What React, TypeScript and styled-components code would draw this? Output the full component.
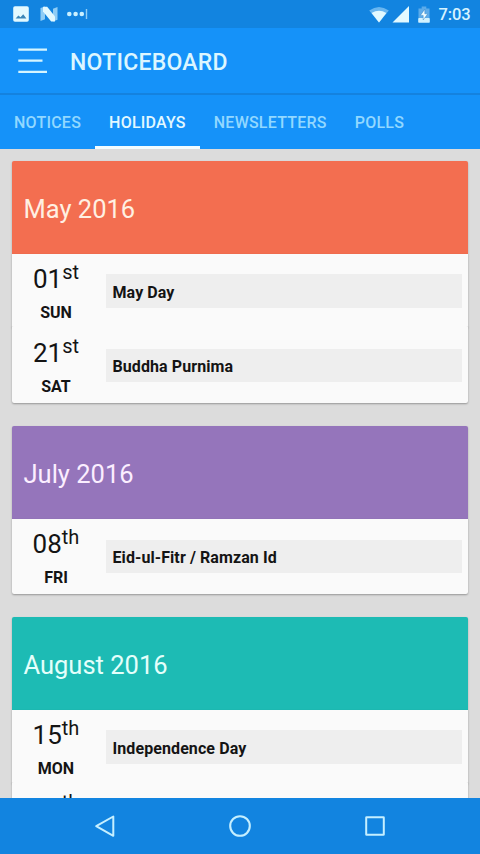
import React from "react";
import styled, { createGlobalStyle } from "styled-components";

const GlobalStyle = createGlobalStyle`
  * { box-sizing: border-box; }
  body { margin: 0; background: #dcdcdc; font-family: Roboto, "Noto Sans", sans-serif; }
`;

const Screen = styled.div`
  display: flex;
  flex-direction: column;
  width: 480px;
  height: 854px;
  overflow: hidden;
  background: #dcdcdc;
`;

const StatusBar = styled.div`
  flex: none;
  display: flex;
  align-items: center;
  justify-content: space-between;
  height: 28px;
  padding: 0 9.5px 0 13px;
  background: #1284e0;
`;

const StatusGroup = styled.div`
  display: flex;
  align-items: center;
`;

const StatusIcon = styled.svg<{ $gap?: number }>`
  display: block;
  flex: none;
  margin-right: ${(p) => p.$gap ?? 0}px;
`;

const Clock = styled.span`
  padding-top: 2px;
  font-size: 16.5px;
  line-height: 26px;
  font-weight: 500;
  color: #d5f3ff;
  letter-spacing: -0.1px;
`;

const AppBar = styled.header`
  flex: none;
  display: flex;
  align-items: center;
  height: 67px;
  padding-left: 18px;
  background: #1592f9;
  border-bottom: 2px solid #1482df;
`;

const MenuButton = styled.button`
  display: block;
  width: 30px;
  height: 28px;
  margin: 0 22px 0 0;
  padding: 0;
  border: 0;
  background: none;
`;

const Title = styled.h1`
  margin: 4px 0 0;
  font-size: 23px;
  line-height: 28px;
  font-weight: 500;
  letter-spacing: 0.25px;
  color: #dcf6ff;
`;

const Tabs = styled.nav`
  flex: none;
  display: flex;
  height: 54px;
  background: #1592f9;
`;

const Tab = styled.a<{ $active?: boolean }>`
  height: 54px;
  padding: 1px 14px 0;
  border-bottom: 3px solid ${(p) => (p.$active ? "#f2fcff" : "transparent")};
  font-size: 16px;
  line-height: 54px;
  font-weight: 500;
  letter-spacing: 0.23px;
  white-space: nowrap;
  color: ${(p) => (p.$active ? "#e2f8ff" : "#92d8ff")};
`;

const Content = styled.main`
  flex: 1;
  min-height: 0;
  overflow: hidden;
  display: flex;
  flex-direction: column;
  gap: 23.5px;
  padding: 12px 12px 0 11.5px;
`;

const Card = styled.section`
  flex: none;
  border-radius: 3px;
`;

const CardHeader = styled.h2<{ $color: string; $ink: string }>`
  height: 92.75px;
  margin: 0;
  padding: 2px 12px 0;
  border-radius: 2px 2px 0 0;
  font-size: 25.5px;
  line-height: 92px;
  font-weight: 400;
  color: ${(p) => p.$ink};
  background: ${(p) => p.$color};
  box-shadow: 0 1px 2px rgba(0, 0, 0, 0.25);
`;

const Row = styled.div`
  position: relative;
  display: grid;
  grid-template-columns: 89px 1fr;
  column-gap: 5.5px;
  height: 74.5px;
  padding-right: 6.5px;
  border-radius: 0 0 2px 2px;
  background: #fafafa;
  box-shadow: 0 1px 2px rgba(0, 0, 0, 0.32);

  /* Stacked rows overlap so only the rounded corners reveal the seam. */
  & + & {
    height: 77.5px;
    margin-top: -3px;
    padding-top: 3px;
    border-radius: 2px;
    clip-path: inset(1px -4px -4px -4px);
  }
`;

const DateCell = styled.div`
  text-align: center;
  color: #141414;
`;

const DayNumber = styled.div`
  display: flex;
  justify-content: center;
  align-items: flex-start;
  height: 46px;
  padding-top: 10px;
  font-size: 26px;
  line-height: 30px;
`;

const Ordinal = styled.span`
  margin-top: -6px;
  font-size: 20px;
  line-height: 28px;
`;

const Weekday = styled.div`
  font-size: 16px;
  line-height: 26px;
  font-weight: 700;
`;

const Holiday = styled.div`
  height: 33.5px;
  margin-top: 20.5px;
  padding: 1.5px 6.5px 0;
  font-size: 16px;
  line-height: 34px;
  font-weight: 700;
  letter-spacing: 0.09px;
  color: #141414;
  background: #eeeeee;
`;

const NavBar = styled.footer`
  flex: none;
  display: grid;
  grid-template-columns: repeat(3, 135px);
  justify-content: center;
  place-items: center;
  height: 56px;
  background: #1284e0;
`;

const months = [
  {
    name: "May 2016",
    color: "#f36e50",
    ink: "#fff0e2",
    days: [
      { n: "01", s: "st", d: "SUN", title: "May Day" },
      { n: "21", s: "st", d: "SAT", title: "Buddha Purnima" },
    ],
  },
  {
    name: "July 2016",
    color: "#9575bb",
    ink: "#fbeeff",
    days: [{ n: "08", s: "th", d: "FRI", title: "Eid-ul-Fitr / Ramzan Id" }],
  },
  {
    name: "August 2016",
    color: "#1dbbb4",
    ink: "#e4fffb",
    days: [
      { n: "15", s: "th", d: "MON", title: "Independence Day" },
      { n: "25", s: "th", d: "THU", title: "Janmashtami" },
    ],
  },
];

const tabs = ["NOTICES", "HOLIDAYS", "NEWSLETTERS", "POLLS"];

export default function App() {
  return (
    <>
      <GlobalStyle />
      <Screen>
        <StatusBar>
          <StatusGroup>
            <StatusIcon $gap={11} width="16" height="16" viewBox="0 0 16 16">
              <rect x="0.2" y="0.2" width="15.6" height="15.6" rx="1.8" fill="#e2f9ff" />
              <path d="M2.6 12.6 L5.4 9.4 L7.5 11.2 L10.2 8.2 L13.4 12.6 Z" fill="#3a86b8" />
            </StatusIcon>
            <StatusIcon $gap={9} width="18" height="16" viewBox="0 0 18 16">
              <path d="M0.5 2 L5 0.5 V13.2 L0.5 15 Z M13 2.8 L17.5 1 V13.8 L13 15.4 Z" fill="#8fcdf5" />
              <path d="M3 0.8 H7.2 L15 10.4 V15.5 H11.2 L3 5.4 Z" fill="#e2f9ff" />
            </StatusIcon>
            <StatusIcon width="21" height="12" viewBox="0 0 21 12">
              <circle cx="2.3" cy="6" r="2.3" fill="#c9f0ff" />
              <circle cx="8.6" cy="6" r="2.3" fill="#c9f0ff" />
              <circle cx="14.8" cy="6" r="2.3" fill="#c9f0ff" />
              <rect x="18.8" y="1" width="1.4" height="10" fill="#8fcdf5" />
            </StatusIcon>
          </StatusGroup>
          <StatusGroup>
            <StatusIcon $gap={3} width="20" height="17" viewBox="0 0 20 17">
              <path d="M0.2 4.4 Q10 -2.6 19.8 4.4 L10 16.5 Z" fill="#69b6f0" />
              <path d="M2.6 6.9 Q10 2.4 17.4 6.9 L10 16.5 Z" fill="#e2f9ff" />
            </StatusIcon>
            <StatusIcon $gap={9} width="17" height="17" viewBox="0 0 17 17">
              <path d="M17 0 V16.5 H0.5 Z" fill="#e2f9ff" />
            </StatusIcon>
            <StatusIcon $gap={8.5} width="12" height="17" viewBox="0 0 12 17">
              <path d="M0.5 2.5 H3.7 V0.5 H8.3 V2.5 H11.5 V12 H0.5 Z" fill="#5cabea" />
              <rect x="0.2" y="12" width="11.6" height="4.8" rx="0.8" fill="#d2f2ff" />
              <path d="M6.8 3.2 L2.4 9.4 H5.2 V14 L9.7 7.8 H6.8 Z" fill="#f0fcff" stroke="#2378bd" strokeWidth="0.4" />
            </StatusIcon>
            <Clock>7:03</Clock>
          </StatusGroup>
        </StatusBar>
        <AppBar>
          <MenuButton aria-label="Menu">
            <svg width="30" height="28" viewBox="0 0 30 28" stroke="#d5f5ff" strokeWidth="2.2" display="block">
              <path d="M0.3 2.6 H29 M0.3 13.7 H24.5 M0.3 24.9 H29" />
            </svg>
          </MenuButton>
          <Title>NOTICEBOARD</Title>
        </AppBar>
        <Tabs>
          {tabs.map((t) => (
            <Tab key={t} $active={t === "HOLIDAYS"}>{t}</Tab>
          ))}
        </Tabs>
        <Content>
          {months.map((m) => (
            <Card key={m.name}>
              <CardHeader $color={m.color} $ink={m.ink}>{m.name}</CardHeader>
              {m.days.map((day) => (
                <Row key={day.n}>
                  <DateCell>
                    <DayNumber>
                      {day.n}
                      <Ordinal>{day.s}</Ordinal>
                    </DayNumber>
                    <Weekday>{day.d}</Weekday>
                  </DateCell>
                  <Holiday>{day.title}</Holiday>
                </Row>
              ))}
            </Card>
          ))}
        </Content>
        <NavBar>
          <svg width="24" height="24" viewBox="0 0 24 24">
            <path d="M20.3 2.5 V21.8 L3.2 12.2 Z" fill="none" stroke="#c5efff" strokeWidth="2" strokeLinejoin="round" />
          </svg>
          <svg width="24" height="24" viewBox="0 0 24 24">
            <circle cx="12" cy="12" r="9.8" fill="none" stroke="#c5efff" strokeWidth="2.1" />
          </svg>
          <svg width="24" height="24" viewBox="0 0 24 24">
            <rect x="3.2" y="3.2" width="17.6" height="17.6" rx="0.4" fill="none" stroke="#c5efff" strokeWidth="2" />
          </svg>
        </NavBar>
      </Screen>
    </>
  );
}
